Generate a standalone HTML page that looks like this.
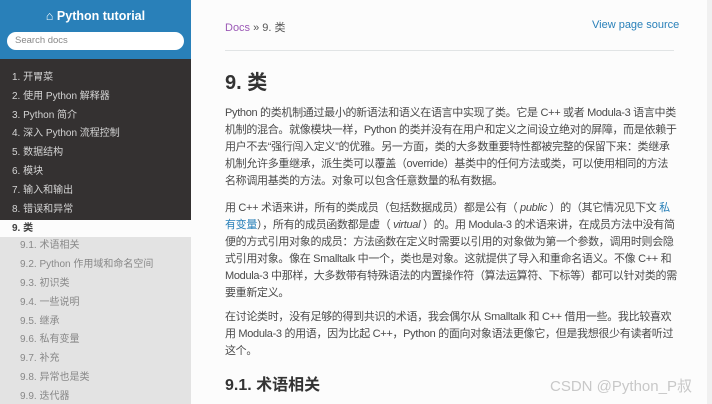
<!DOCTYPE html>
<html><head><meta charset="utf-8"><style>
*{margin:0;padding:0;box-sizing:border-box}
html,body{width:712px;height:404px;overflow:hidden}
body{background:#fcfcfc;font-family:"Liberation Sans","Noto Sans CJK SC",sans-serif;position:relative}
.side{position:absolute;left:0;top:0;width:191px;height:404px;background:#343131;overflow:hidden}
.top{height:59px;background:#2980b9;text-align:center;color:#fff}
.top .t{font-weight:bold;font-size:12.5px;padding-top:8px;height:32px;line-height:16px}
.search{margin:0 7px;height:18px;border-radius:10px;background:#fff;font-size:9.5px;color:#888;text-align:left;padding-left:8px;line-height:18px}
.nav{padding-top:10px}
.it{height:18.8px;line-height:18.8px;font-size:10px;color:#d4d4d4;padding-left:12px;white-space:nowrap}
.cur{background:#fcfcfc;color:#404040;font-weight:bold;height:17px;line-height:17px;margin-top:1px;font-size:10px;padding-left:12px}
.sub{background:#e3e3e3;height:170px}
.sub div{color:#888;padding-left:20px;height:18.8px;line-height:18.8px;font-size:10px;white-space:nowrap}
.main{position:absolute;left:225px;top:0;width:450px;color:#404040}
.bc{position:absolute;top:19px;font-size:11px;color:#555}
.bc a{color:#9b59b6;text-decoration:none}
.vs{position:absolute;left:367px;top:19px;font-size:11px;color:#2980b9;white-space:nowrap}
.hr{position:absolute;top:50px;width:449px;height:1px;background:#e1e4e5}
h1{position:absolute;top:66px;font-size:20px;font-weight:bold;color:#333}
p{position:absolute;font-size:11px;line-height:17px;width:452px;letter-spacing:-0.32px;color:#4a4a4a}
h2{position:absolute;top:371px;font-size:16px;font-weight:bold;color:#333}
.lnk{color:#2980b9}
.strip{position:absolute;left:707px;top:0;width:5px;height:404px;background:#f0f0f0}
.wm{position:absolute;left:550px;top:375px;font-size:15px;color:#c8c8c8;white-space:nowrap}
</style></head><body>
<div class="side">
<div class="top"><div class="t">⌂ Python tutorial</div><div class="search">Search docs</div></div>
<div class="nav">
<div class="it">1. 开胃菜</div><div class="it">2. 使用 Python 解释器</div><div class="it">3. Python 简介</div><div class="it">4. 深入 Python 流程控制</div><div class="it">5. 数据结构</div><div class="it">6. 模块</div><div class="it">7. 输入和输出</div><div class="it">8. 错误和异常</div>
<div class="cur">9. 类</div>
<div class="sub"><div>9.1. 术语相关</div><div>9.2. Python 作用域和命名空间</div><div>9.3. 初识类</div><div>9.4. 一些说明</div><div>9.5. 继承</div><div>9.6. 私有变量</div><div>9.7. 补充</div><div>9.8. 异常也是类</div><div>9.9. 迭代器</div></div>
</div></div>
<div class="main">
<div class="bc"><a>Docs</a> » 9. 类</div>
<div class="vs">View page source</div>
<div class="hr"></div>
<h1>9. 类</h1>
<p style="top:105px">Python 的类机制通过最小的新语法和语义在语言中实现了类。它是 C++ 或者 Modula-3 语言中类机制的混合。就像模块一样，Python 的类并没有在用户和定义之间设立绝对的屏障，而是依赖于用户不去“强行闯入定义”的优雅。另一方面，类的大多数重要特性都被完整的保留下来：类继承机制允许多重继承，派生类可以覆盖（override）基类中的任何方法或类，可以使用相同的方法名称调用基类的方法。对象可以包含任意数量的私有数据。</p>
<p style="top:200px">用 C++ 术语来讲，所有的类成员（包括数据成员）都是公有（ <i>public</i> ）的（其它情况见下文 <span class="lnk">私有变量</span>），所有的成员函数都是虚（ <i>virtual</i> ）的。用 Modula-3 的术语来讲，在成员方法中没有简便的方式引用对象的成员：方法函数在定义时需要以引用的对象做为第一个参数，调用时则会隐式引用对象。像在 Smalltalk 中一个，类也是对象。这就提供了导入和重命名语义。不像 C++ 和 Modula-3 中那样，大多数带有特殊语法的内置操作符（算法运算符、下标等）都可以针对类的需要重新定义。</p>
<p style="top:309px">在讨论类时，没有足够的得到共识的术语，我会偶尔从 Smalltalk 和 C++ 借用一些。我比较喜欢用 Modula-3 的用语，因为比起 C++，Python 的面向对象语法更像它，但是我想很少有读者听过这个。</p>
<h2>9.1. 术语相关</h2>
</div>
<div class="strip"></div>
<div class="wm">CSDN @Python_P叔</div>
</body></html>
